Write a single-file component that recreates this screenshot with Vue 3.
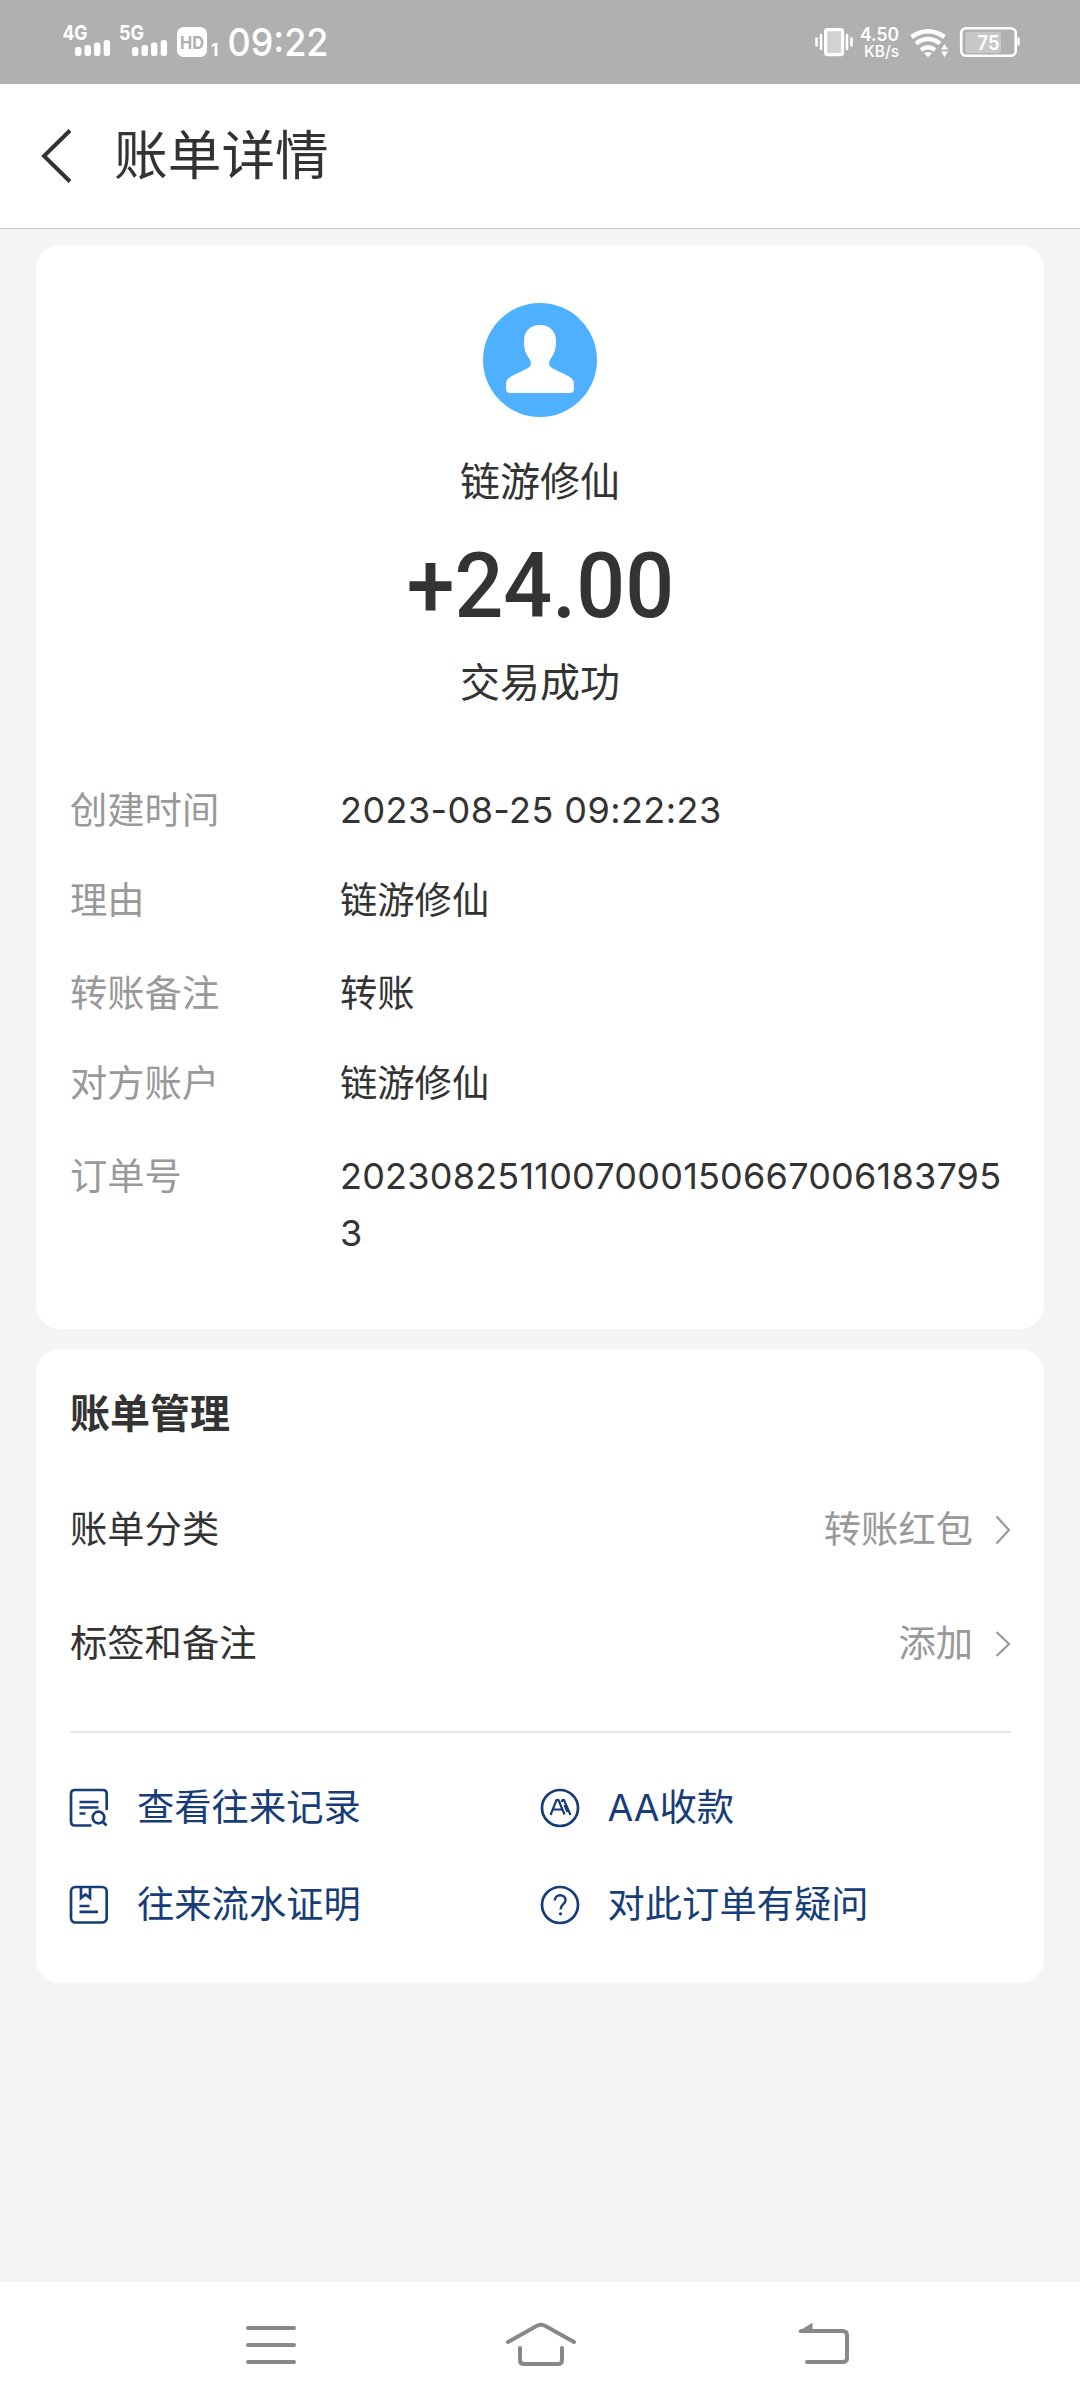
<script setup>
const details = [
  { label: '创建时间', value: '2023-08-25 09:22:23', kind: 'date' },
  { label: '理由', value: '链游修仙' },
  { label: '转账备注', value: '转账' },
  { label: '对方账户', value: '链游修仙' },
  { label: '订单号', value: '20230825110070001506670061837953', kind: 'order' },
]

const settings = [
  { label: '账单分类', value: '转账红包', tall: true },
  { label: '标签和备注', value: '添加' },
]

const actions = [
  { icon: 'search', label: '查看往来记录' },
  { icon: 'aa', label: 'AA收款' },
  { icon: 'proof', label: '往来流水证明' },
  { icon: 'help', label: '对此订单有疑问' },
]
</script>

<template>
  <div class="screen">
    <div class="status">
      <svg class="status-left" width="280" height="84" viewBox="60 0 280 84" fill="#fff">
        <g class="net">
          <text x="62.5" y="40" textLength="25" lengthAdjust="spacingAndGlyphs">4G</text>
          <text x="119" y="40" textLength="25" lengthAdjust="spacingAndGlyphs">5G</text>
        </g>
        <g v-for="dx in [0, 57]" :key="dx" :transform="`translate(${dx} 0)`">
          <rect x="75" y="47" width="6.4" height="9" rx="2.5" />
          <rect x="84.5" y="45" width="6.4" height="11" rx="2.5" />
          <rect x="94" y="42.5" width="6.4" height="13.5" rx="2.5" />
          <rect x="103.7" y="40" width="6.4" height="16" rx="2.5" />
        </g>
        <rect x="177" y="27" width="30" height="30" rx="6.5" />
        <text class="hd" x="180" y="48.5" textLength="24" lengthAdjust="spacingAndGlyphs">HD</text>
        <text class="sim" x="211" y="56">1</text>
        <text class="clock" x="227.5" y="56" textLength="101" lengthAdjust="spacingAndGlyphs">09:22</text>
      </svg>
      <svg class="status-right" width="210" height="84" viewBox="812 0 210 84" fill="#fff">
        <rect x="825.6" y="29.6" width="17" height="25" rx="2" fill="#d3d3d3" stroke="#fff" stroke-width="3.2" />
        <path d="M816.500 38.500v7M821 35v14M847 35v14M851.500 38.500v7" stroke="#fff" stroke-width="2.6" stroke-linecap="round" />
        <text class="rate" x="860" y="41" textLength="39" lengthAdjust="spacingAndGlyphs">4.50</text>
        <text class="unit" x="864" y="56.5" textLength="35" lengthAdjust="spacingAndGlyphs">KB/s</text>
        <g fill="none" stroke="#fff" stroke-width="4.6">
          <path d="M911.500 37Q928 25.500 944.500 37" />
          <path d="M916 43.500Q928 34.500 940 43.500" />
          <path d="M921 50Q928 44.500 935 50" />
        </g>
        <path d="M924 53.500Q928 50.500 932 53.500L928 57Z" />
        <path d="M941 49.500L944.500 44L948 49.500ZM941 51.500H948L944.500 57Z" />
        <rect x="965.5" y="32" width="35.5" height="21" rx="2" fill="#c8c8c8" />
        <rect x="961.2" y="28.2" width="54.6" height="27.6" rx="5" fill="none" stroke="#fff" stroke-width="2.6" />
        <path d="M1018.500 37.500v8" stroke="#fff" stroke-width="2.2" />
        <text class="level" x="977.5" y="49.5" textLength="22" lengthAdjust="spacingAndGlyphs">75</text>
      </svg>
    </div>

    <header class="header">
      <svg class="back" width="34" height="56" viewBox="0 0 34 56" fill="none" stroke="#333" stroke-width="4">
        <path d="M32 2.500L6 28L32 53.500" />
      </svg>
      <h1>账单详情</h1>
    </header>

    <main class="content">
      <section class="card bill">
        <svg class="avatar" width="114" height="114" viewBox="0 0 114 114">
          <circle cx="57" cy="57" r="57" fill="#4fb0ff" />
          <path
            fill="#fff"
            d="M57 22C66.500 22 73 28 73 38C73 47 71 51 67.500 56C65 60 66 63 69 65C74 68 80 70 85 73C90 76 91 78 91 82V86Q91 90 87 90H27Q23 90 23 86V82C23 78 24 76 29 73C34 70 40 68 45 65C48 63 49 60 46.500 56C43 51 41 47 41 38C41 28 47.500 22 57 22Z"
          />
        </svg>
        <div class="payer">链游修仙</div>
        <div class="amount">+24.00</div>
        <div class="state">交易成功</div>
        <dl class="details">
          <div v-for="row in details" :key="row.label" class="detail">
            <dt>{{ row.label }}</dt>
            <dd :class="row.kind">{{ row.value }}</dd>
          </div>
        </dl>
      </section>

      <section class="card manage">
        <h2>账单管理</h2>
        <div v-for="item in settings" :key="item.label" class="setting">
          <span>{{ item.label }}</span>
          <span class="setting-value">{{ item.value }}</span>
          <svg width="16" height="30" viewBox="0 0 16 30" fill="none" stroke="#999" stroke-width="2.2">
            <path :d="item.tall ? 'M1.500 1.500L14 15L1.500 28.500' : 'M1.500 3L14 15L1.500 27'" />
          </svg>
        </div>
        <div class="actions">
          <div v-for="action in actions" :key="action.icon" class="action">
            <svg width="40" height="40" viewBox="0 0 40 40" fill="none" stroke="#173d78" stroke-width="2.7">
              <template v-if="action.icon === 'search'">
                <path d="M37.700 22V6Q37.700 2 33.700 2H6Q2 2 2 6V33.500Q2 37.500 6 37.500H22.500" />
                <path d="M10.500 14H29.500M10.500 19.500H29.500M10.500 25.500H16.500" />
                <circle cx="29.500" cy="29.500" r="5.800" />
                <path d="M33.500 33.500L37.500 37.500" />
              </template>
              <template v-else-if="action.icon === 'proof'">
                <rect x="2" y="2" width="35.700" height="35.500" rx="4.500" />
                <path d="M12 2V13L16.500 9.500L21 13V2M10.500 21H20.500M10.500 26.800H29" />
              </template>
              <template v-else-if="action.icon === 'aa'">
                <circle cx="20" cy="20" r="18" />
                <path stroke-width="2.2" d="M10.500 27L16.500 12H18.500L24.500 26.500M13 21.500H21.500M21.500 14L22.500 12H24L30.500 27M24.500 17L27.500 24M26 21.500H28" />
              </template>
              <template v-else>
                <circle cx="20" cy="20" r="18" />
                <path stroke-width="2.400" d="M14.800 15.500C14.800 8.500 25.500 8.500 25.500 15.200C25.500 19 20.500 19.500 20.500 24.500" />
                <circle cx="20.500" cy="28.800" r="1.600" fill="#173d78" stroke="none" />
              </template>
            </svg>
            <span>{{ action.label }}</span>
          </div>
        </div>
      </section>
    </main>

    <nav class="navbar">
      <svg width="54" height="50" viewBox="0 0 54 50" fill="none" stroke="#888" stroke-width="4" stroke-linecap="round">
        <path d="M4 8H50M4 25H50M4 42H50" />
      </svg>
      <svg class="home" width="74" height="50" viewBox="0 0 74 50" fill="none" stroke="#888" stroke-width="4" stroke-linecap="round">
        <path d="M4 22L32.500 6Q37 3.500 41.500 6L70 22" />
        <path d="M16 28V40Q16 44 20 44H54Q58 44 58 40V28" />
      </svg>
      <svg class="return" width="54" height="50" viewBox="0 0 54 50" fill="none" stroke="#888" stroke-width="4" stroke-linecap="round">
        <path d="M4 11H45Q50 11 50 15V38Q50 42 45 42H10" />
        <path d="M2 11.500L15 3.500V12Z" fill="#888" stroke="#888" stroke-width="1" />
      </svg>
    </nav>
  </div>
</template>

<style>
body {
  background: #f4f4f4;
}
</style>

<style scoped>
.screen,
.screen * {
  box-sizing: border-box;
}
.screen {
  display: flex;
  flex-direction: column;
  width: 1080px;
  height: 2408px;
  background: #f4f4f4;
  color: #333;
  font-family: Inter, 'Noto Sans CJK SC', sans-serif;
  font-size: 37.3px;
  line-height: 56px;
}
svg {
  display: block;
  flex: none;
}
h1,
h2,
dl,
dd {
  margin: 0;
}
.status {
  display: flex;
  justify-content: space-between;
  height: 84px;
  padding: 0 58px 0 60px;
  background: #b0b0b0;
}
.net {
  font-size: 20.5px;
  font-weight: 700;
}
.hd {
  font-size: 18px;
  font-weight: 700;
  fill: #b0b0b0;
}
.sim {
  font-size: 17px;
  font-weight: 700;
}
.clock {
  font-size: 38.5px;
  font-weight: 500;
}
.rate {
  font-size: 18.5px;
  font-weight: 600;
}
.unit {
  font-size: 16px;
  font-weight: 500;
}
.level {
  font-size: 20px;
  font-weight: 600;
}
.header {
  display: flex;
  align-items: center;
  height: 145px;
  padding-left: 38px;
  border-bottom: 1px solid #c9c9c9;
  background: #fff;
}
h1 {
  margin-left: 42px;
  font-size: 53.7px;
  font-weight: 400;
}
.content {
  display: flex;
  flex: 1;
  flex-direction: column;
  gap: 20px;
  padding: 16px 36px 0;
}
.card {
  border-radius: 24px;
  background: #fff;
}
.bill {
  display: flex;
  flex-direction: column;
  align-items: center;
  height: 1084px;
  padding-top: 58px;
}
.payer,
.state {
  font-size: 40px;
  line-height: 60px;
}
.payer {
  margin-top: 35px;
}
.amount {
  margin-top: 19px;
  font-family: Roboto, sans-serif;
  font-size: 91px;
  font-weight: 500;
  line-height: 110px;
  transform: scaleX(0.946);
}
.state {
  margin-top: 12px;
}
.details {
  display: flex;
  flex-direction: column;
  gap: 34.5px;
  align-self: stretch;
  margin-top: 69px;
  padding: 0 33px 0 34px;
}
.detail {
  display: flex;
  line-height: 57px;
}
.detail:nth-child(even) {
  margin: -1.5px 0 1.5px;
}
dt {
  width: 270px;
  color: #999;
}
dd {
  flex: 1;
  word-break: break-all;
}
.date,
.order {
  font-size: 36px;
}
.date {
  letter-spacing: 0.42px;
}
.order {
  letter-spacing: 0.22px;
}
.manage {
  height: 634px;
  padding: 37px 33px 0 34px;
}
h2 {
  font-size: 40px;
  font-weight: 700;
}
.setting {
  display: flex;
  align-items: center;
  height: 114px;
}
h2 + .setting {
  margin-top: 31px;
}
.setting-value {
  margin: 0 22px 0 auto;
  color: #999;
}
.actions {
  display: grid;
  grid-template-columns: 1fr 1fr;
  grid-auto-rows: 97px;
  align-items: center;
  margin-top: 30px;
  padding-top: 26px;
  border-top: 2px solid #e5e5e5;
  color: #173d78;
}
.action {
  display: flex;
  align-items: center;
}
.action svg {
  margin: 0 28px 0 -1px;
}
.navbar {
  display: flex;
  align-items: center;
  height: 126px;
  padding-left: 244px;
  background: #fff;
}
.home {
  margin-left: 206px;
}
.return {
  margin-left: 219px;
}
</style>
